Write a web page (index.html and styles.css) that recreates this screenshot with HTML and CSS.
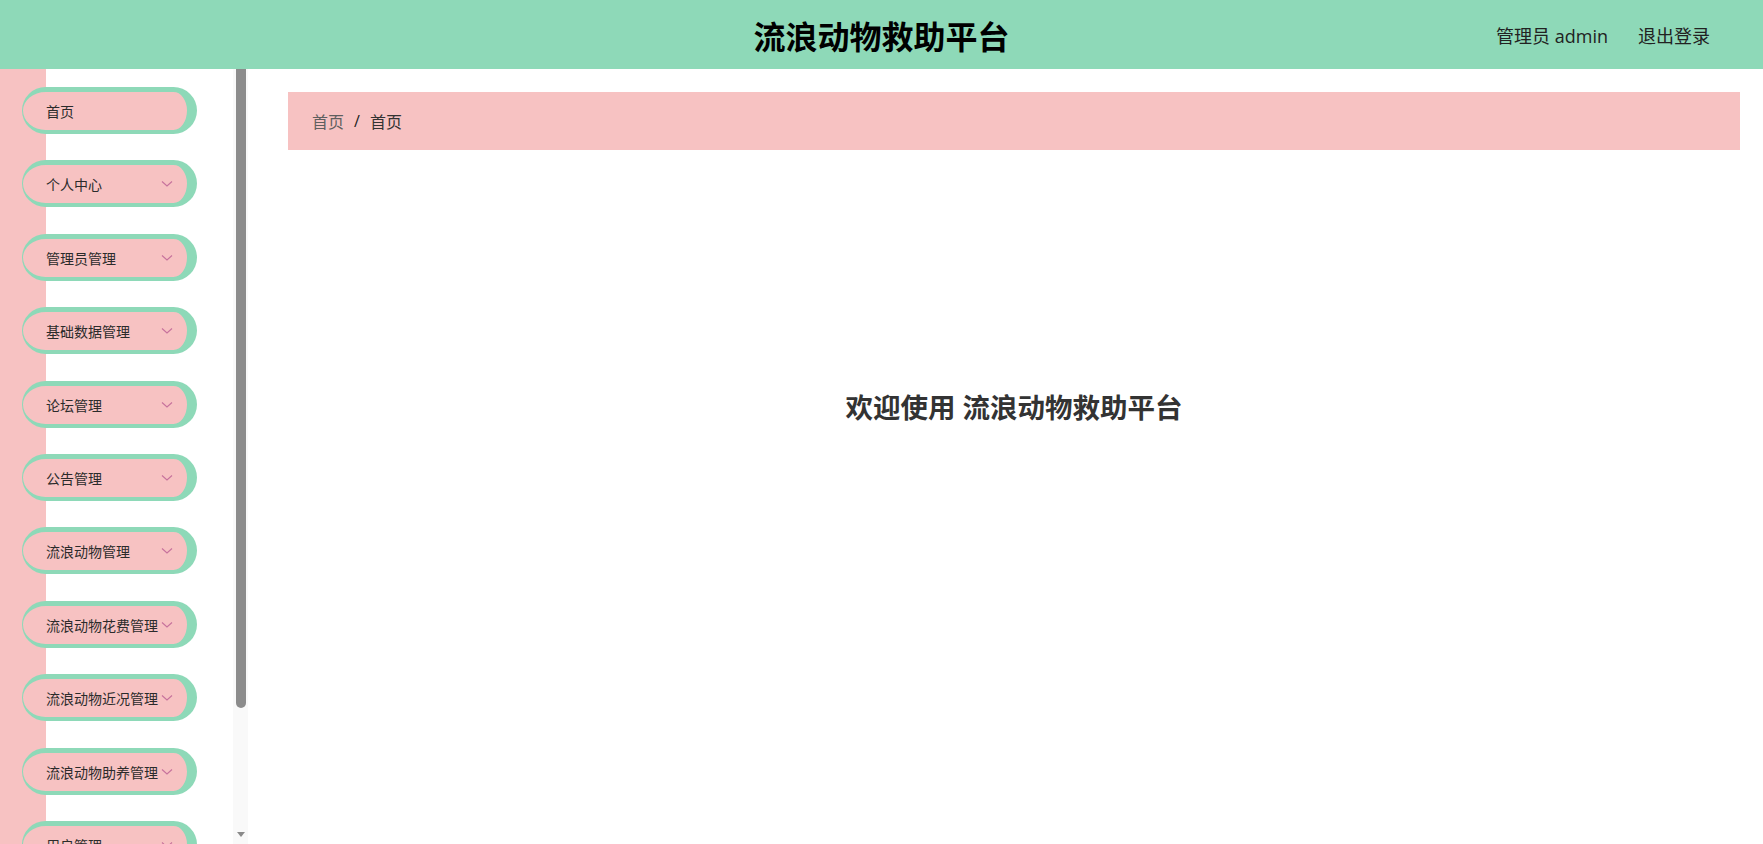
FILE: index.html
```html
<!DOCTYPE html>
<html lang="zh-CN">

<head>
    <meta charset="UTF-8">
    <meta name="viewport" content="width=device-width, initial-scale=1.0">
    <title>流浪动物救助平台</title>
    <link rel="stylesheet" href="styles.css">
</head>

<body>
    <header class="topbar">
        <h1 class="site-title">流浪动物救助平台</h1>
        <div class="user-box">
            <span>管理员 admin</span>
            <a href="#">退出登录</a>
        </div>
    </header>

    <div class="layout">
        <aside class="sidebar">
            <div class="menu-wrap">
                <ul class="menu">
                    <li class="menu-item"><span>首页</span></li>
                    <li class="menu-item"><span>个人中心</span><svg class="arrow" viewBox="0 0 12 8"><polyline points="1,1.5 6,6 11,1.5"/></svg></li>
                    <li class="menu-item"><span>管理员管理</span><svg class="arrow" viewBox="0 0 12 8"><polyline points="1,1.5 6,6 11,1.5"/></svg></li>
                    <li class="menu-item"><span>基础数据管理</span><svg class="arrow" viewBox="0 0 12 8"><polyline points="1,1.5 6,6 11,1.5"/></svg></li>
                    <li class="menu-item"><span>论坛管理</span><svg class="arrow" viewBox="0 0 12 8"><polyline points="1,1.5 6,6 11,1.5"/></svg></li>
                    <li class="menu-item"><span>公告管理</span><svg class="arrow" viewBox="0 0 12 8"><polyline points="1,1.5 6,6 11,1.5"/></svg></li>
                    <li class="menu-item"><span>流浪动物管理</span><svg class="arrow" viewBox="0 0 12 8"><polyline points="1,1.5 6,6 11,1.5"/></svg></li>
                    <li class="menu-item"><span>流浪动物花费管理</span><svg class="arrow" viewBox="0 0 12 8"><polyline points="1,1.5 6,6 11,1.5"/></svg></li>
                    <li class="menu-item"><span>流浪动物近况管理</span><svg class="arrow" viewBox="0 0 12 8"><polyline points="1,1.5 6,6 11,1.5"/></svg></li>
                    <li class="menu-item"><span>流浪动物助养管理</span><svg class="arrow" viewBox="0 0 12 8"><polyline points="1,1.5 6,6 11,1.5"/></svg></li>
                    <li class="menu-item"><span>用户管理</span><svg class="arrow" viewBox="0 0 12 8"><polyline points="1,1.5 6,6 11,1.5"/></svg></li>
                </ul>
            </div>
            <!-- scroll track for the menu column -->
            <div class="scroll-track">
                <div class="scroll-thumb"></div>
                <svg class="scroll-down" viewBox="0 0 8 5"><polygon points="0,0 8,0 4,5"/></svg>
            </div>
        </aside>

        <main class="content">
            <div class="breadcrumb">
                <span class="crumb-link">首页</span>
                <span class="crumb-sep">/</span>
                <span class="crumb-current">首页</span>
            </div>
            <h2 class="welcome">欢迎使用 流浪动物救助平台</h2>
        </main>
    </div>
</body>

</html>
```

FILE: styles.css
```css
/* Reset */
* {
    margin: 0;
    padding: 0;
    box-sizing: border-box;
}

body {
    font-family: "Open Sans", "Noto Sans CJK SC", sans-serif;
    color: #333;
    background-color: #fff;
    height: 100vh;
    overflow: hidden;
}

/* Top bar */
.topbar {
    height: 69px;
    background-color: #8ed9b8;
    display: flex;
    align-items: center;
    justify-content: center;
    position: relative;
}

.site-title {
    font-size: 32px;
    font-weight: bold;
    color: #000;
}

.user-box {
    position: absolute;
    right: 53px;
    top: 0;
    height: 69px;
    display: flex;
    align-items: center;
    gap: 30px;
    font-size: 18px;
    color: #222;
}

.user-box a {
    color: #222;
    text-decoration: none;
}

/* Sidebar + content */
.layout {
    display: flex;
    height: calc(100vh - 69px);
}

.sidebar {
    width: 248px;
    flex-shrink: 0;
    height: 100%;
    display: flex;
}

.menu-wrap {
    flex: 1;
    overflow: hidden;
    background: linear-gradient(to right, #f7c2c2 46px, #fff 46px);
}

.menu {
    list-style: none;
    padding: 18px 0 0 22px;
}

.menu-item {
    width: 175px;
    height: 47px;
    margin-bottom: 26.4px;
    background-color: #f7c2c2;
    border-style: solid;
    border-color: #8ed9b8;
    border-width: 5px 10px 4px 1px;
    border-radius: 24px;
    display: flex;
    align-items: center;
    justify-content: space-between;
    padding: 0 14px 0 23px;
    font-size: 14px;
    color: #2b2b2b;
    cursor: pointer;
    white-space: nowrap;
}

.arrow {
    width: 12px;
    height: 8px;
    flex-shrink: 0;
    fill: none;
    stroke: #c7729c;
    stroke-width: 1.1;
}

.scroll-track {
    width: 15px;
    background-color: #f9f9f9;
    display: flex;
    flex-direction: column;
    align-items: center;
    justify-content: space-between;
    padding-bottom: 7px;
}

.scroll-thumb {
    width: 10px;
    height: 639px;
    background-color: #8c8c8c;
    border-radius: 0 0 5px 5px;
}

.scroll-down {
    width: 8px;
    height: 5px;
    fill: #8a8a8a;
}

.content {
    flex: 1;
    padding: 23px 23px 0 40px;
}

.breadcrumb {
    height: 58px;
    background-color: #f7c2c2;
    display: flex;
    align-items: center;
    padding-left: 24px;
    font-size: 16px;
}

.crumb-link {
    color: #5f5f5f;
}

.crumb-sep {
    margin: 0 10px;
    color: #222;
}

.crumb-current {
    color: #333;
}

.welcome {
    margin-top: 238px;
    text-align: center;
    font-size: 27.5px;
    font-weight: bold;
    color: #333;
    line-height: 40px;
}
```
